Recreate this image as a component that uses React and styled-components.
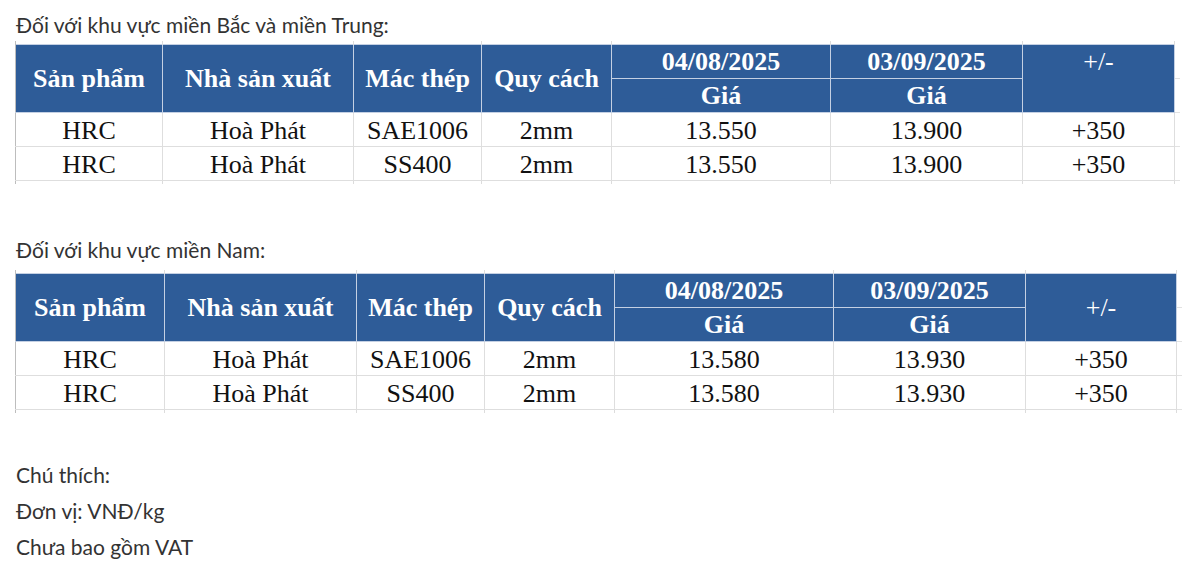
import React from "react";
import styled, { createGlobalStyle } from "styled-components";

const GlobalStyle = createGlobalStyle`
  html, body {
    margin: 0;
    padding: 0;
    background: #ffffff;
  }
  body {
    font-family: Lato, "Noto Sans", sans-serif;
  }
`;

const regions = [
  {
    title: "Đối với khu vực miền Bắc và miền Trung:",
    cols: [147, 191, 128, 130, 219, 192, 152],
    plusTop: true,
    gapBefore: 12,
    gapAfter: 3,
    rows: [
      ["HRC", "Hoà Phát", "SAE1006", "2mm", "13.550", "13.900", "+350"],
      ["HRC", "Hoà Phát", "SS400", "2mm", "13.550", "13.900", "+350"],
    ],
  },
  {
    title: "Đối với khu vực miền Nam:",
    cols: [149, 192, 128, 130, 219, 192, 151],
    plusTop: false,
    gapBefore: 53,
    gapAfter: 7,
    rows: [
      ["HRC", "Hoà Phát", "SAE1006", "2mm", "13.580", "13.930", "+350"],
      ["HRC", "Hoà Phát", "SS400", "2mm", "13.580", "13.930", "+350"],
    ],
  },
];

const notes = ["Chú thích:", "Đơn vị: VNĐ/kg", "Chưa bao gồm VAT"];

const Page = styled.div`
  padding: 0 0 0 16px;
  width: 1184px;
  box-sizing: border-box;
`;

const Caption = styled.div`
  font-family: Lato, "Noto Sans", sans-serif;
  font-size: 21px;
  line-height: 26px;
  color: #333333;
  margin-top: ${(p) => p.$before}px;
  margin-bottom: ${(p) => p.$after}px;
`;

const Sheet = styled.table`
  border-collapse: collapse;
  table-layout: fixed;
  font-family: "Liberation Serif", "Times New Roman", serif;
  margin-left: -1px;
`;

const EdgeCell = styled.td`
  height: 3px;
  padding: 0;
  border-left: 1px solid #dcdcdc;
  border-right: 1px solid #dcdcdc;
  &:first-child {
    border-left: 1px solid #bdbdbd;
  }
`;

const TailCell = styled.td`
  padding: 0;
  border-bottom: 1px solid #e2e2e2;
`;

const HeadCell = styled.th`
  background: #2e5c98;
  color: #ffffff;
  font-weight: ${(p) => (p.$light ? 400 : 700)};
  font-size: 26px;
  line-height: 30px;
  height: 33px;
  padding: ${(p) => (p.$top ? "2px 0 0" : "0")};
  text-align: center;
  vertical-align: ${(p) => (p.$top ? "top" : "middle")};
  border: 1px solid #c4d0e3;
  white-space: nowrap;
  overflow: hidden;
  &:first-child {
    border-left: 1px solid #bdbdbd;
  }
`;

const BodyCell = styled.td`
  color: #111111;
  font-size: 26px;
  line-height: 31px;
  padding: 2px 0 0;
  text-align: center;
  vertical-align: middle;
  border: 1px solid #dedede;
  white-space: nowrap;
  &:first-child {
    border-left: 1px solid #bdbdbd;
  }
`;

const Notes = styled.div`
  margin-top: 44px;
`;

const NoteLine = styled.div`
  font-family: Lato, "Noto Sans", sans-serif;
  font-size: 21px;
  line-height: 36px;
  color: #333333;
`;

function PriceTable({ region }) {
  return (
    <Sheet>
      <colgroup>
        {region.cols.map((w, i) => (
          <col key={i} style={{ width: w }} />
        ))}
        <col style={{ width: 5 }} />
      </colgroup>
      <tbody>
        <tr>
          {region.cols.map((w, i) => (
            <EdgeCell key={i} />
          ))}
          <td />
        </tr>
        <tr>
          <HeadCell rowSpan={2}>Sản phẩm</HeadCell>
          <HeadCell rowSpan={2}>Nhà sản xuất</HeadCell>
          <HeadCell rowSpan={2}>Mác thép</HeadCell>
          <HeadCell rowSpan={2}>Quy cách</HeadCell>
          <HeadCell>04/08/2025</HeadCell>
          <HeadCell>03/09/2025</HeadCell>
          <HeadCell rowSpan={2} $light $top={region.plusTop}>
            +/-
          </HeadCell>
          <TailCell />
        </tr>
        <tr>
          <HeadCell>Giá</HeadCell>
          <HeadCell>Giá</HeadCell>
          <TailCell />
        </tr>
        {region.rows.map((row, r) => (
          <tr key={r}>
            {row.map((v, c) => (
              <BodyCell key={c}>{v}</BodyCell>
            ))}
            <TailCell />
          </tr>
        ))}
        <tr>
          {region.cols.map((w, i) => (
            <EdgeCell key={i} />
          ))}
          <td />
        </tr>
      </tbody>
    </Sheet>
  );
}

export default function App() {
  return (
    <>
      <GlobalStyle />
      <Page>
        {regions.map((region) => (
          <section key={region.title}>
            <Caption $before={region.gapBefore} $after={region.gapAfter}>
              {region.title}
            </Caption>
            <PriceTable region={region} />
          </section>
        ))}
        <Notes>
          {notes.map((n) => (
            <NoteLine key={n}>{n}</NoteLine>
          ))}
        </Notes>
      </Page>
    </>
  );
}
